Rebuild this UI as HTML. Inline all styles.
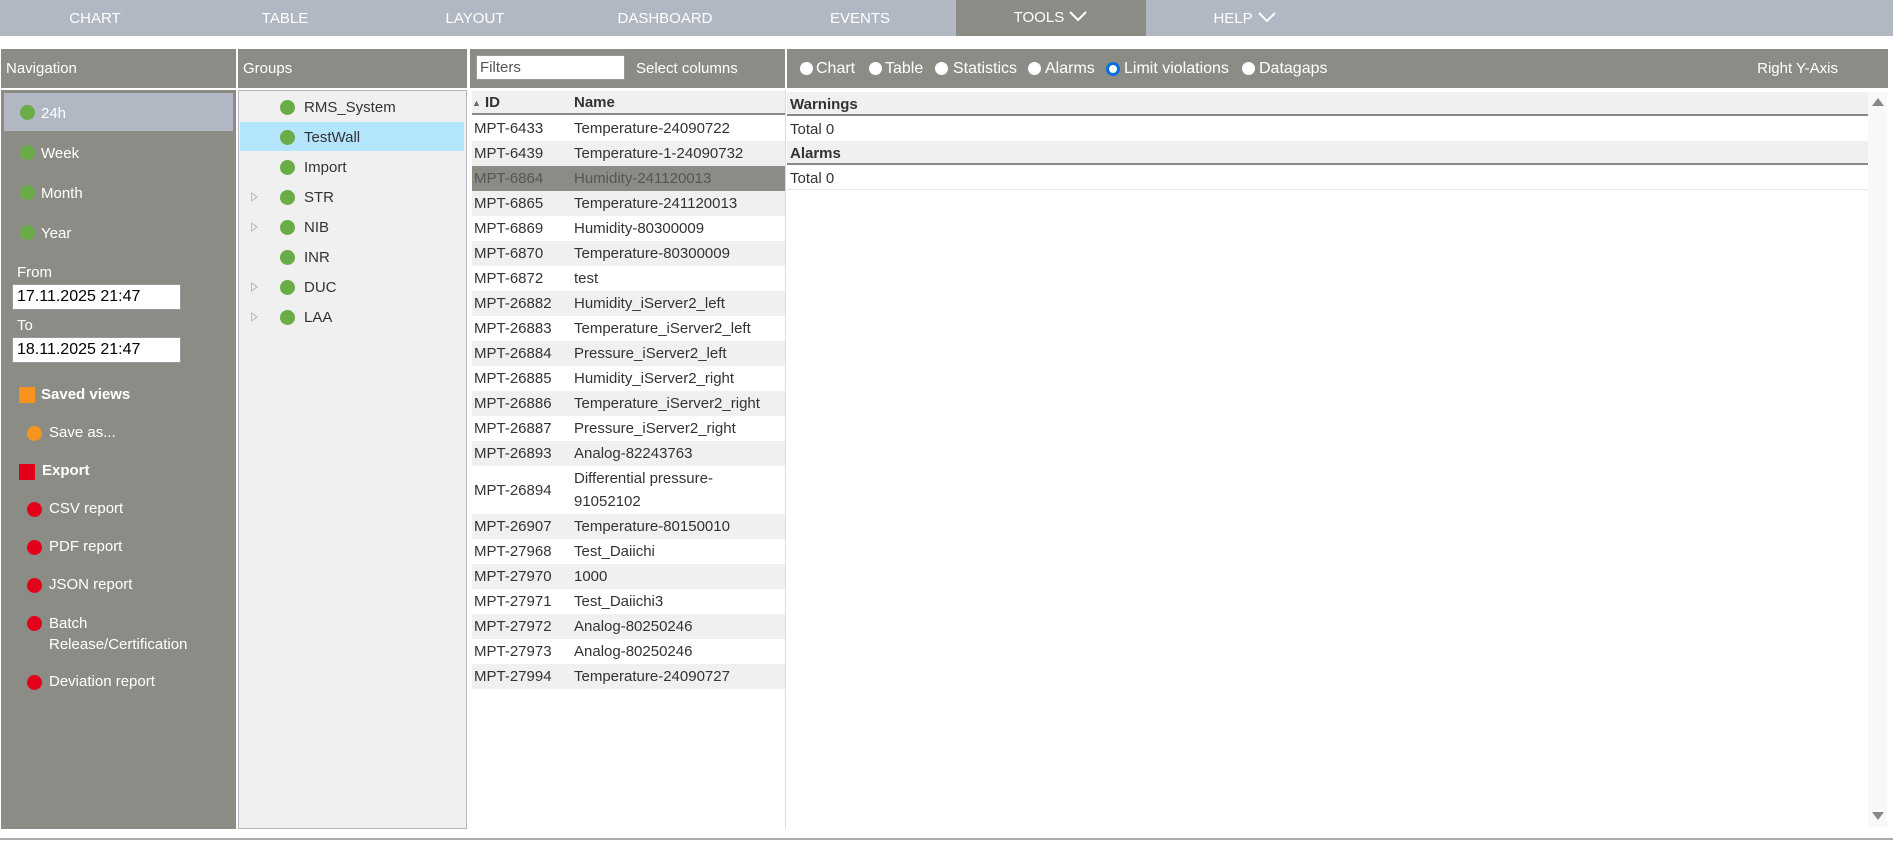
<!DOCTYPE html>
<html><head><meta charset="utf-8"><style>
*{box-sizing:border-box;margin:0;padding:0}
body{width:1893px;height:845px;background:#fff;font-family:"Liberation Sans",sans-serif;font-size:15px;color:#333;position:relative;overflow:hidden}
.a{position:absolute;white-space:nowrap}
.top{left:0;top:0;width:1893px;height:36px;background:#b1b8c3}
.top div{position:absolute;top:1px;height:35px;width:190px;text-align:center;line-height:35px;color:#fff;font-size:15px}
.hd{background:#8c8c87;color:#fff;top:49px;height:39px;line-height:39px;font-size:15px}
.dot{position:absolute;width:15px;height:15px;border-radius:50%}
.g{background:#6aac48}
.row{position:absolute;left:0;width:313px;height:25px;line-height:25px}
.row span{position:absolute;left:2px}
.row b{font-weight:normal;position:absolute;left:102px}
.alt{background:#f0f0f0}
.tri{position:absolute;width:0;height:0;border-top:5px solid transparent;border-bottom:5px solid transparent;border-left:7px solid #bbb}
.tri:after{content:"";position:absolute;left:-6px;top:-3px;border-top:3px solid transparent;border-bottom:3px solid transparent;border-left:4px solid #f0f0f0}
.rad{position:absolute;top:13px;width:13px;height:13px;border-radius:50%;background:#fff}
.rl{position:absolute;top:0;font-size:16px}
.w{color:#fff}
</style></head><body>
<div class="a top">
<div style="left:0">CHART</div><div style="left:190px">TABLE</div><div style="left:380px">LAYOUT</div><div style="left:570px">DASHBOARD</div><div style="left:765px">EVENTS</div>
<div style="left:956px;top:0;height:36px;background:#8c8c87">TOOLS <svg width="20" height="12" viewBox="0 0 20 12"><path d="M2 2 L10 10 L18 2" stroke="#fff" stroke-width="2" fill="none"/></svg></div>
<div style="left:1150px">HELP <svg width="20" height="12" viewBox="0 0 20 12"><path d="M2 2 L10 10 L18 2" stroke="#fff" stroke-width="2" fill="none"/></svg></div>
</div>

<!-- Navigation -->
<div class="a hd" style="left:1px;width:235px;padding-left:5px">Navigation</div>
<div class="a" style="left:1px;top:90px;width:235px;height:739px;background:#8c8c87"></div>
<div class="a" style="left:4px;top:93px;width:229px;height:38px;background:#b1b8c3"></div>
<div class="dot g" style="left:20px;top:105px"></div><div class="a w" style="left:41px;top:105px">24h</div>
<div class="dot g" style="left:20px;top:145px"></div><div class="a w" style="left:41px;top:145px">Week</div>
<div class="dot g" style="left:20px;top:185px"></div><div class="a w" style="left:41px;top:185px">Month</div>
<div class="dot g" style="left:20px;top:225px"></div><div class="a w" style="left:41px;top:225px">Year</div>
<div class="a w" style="left:17px;top:264px">From</div>
<div class="a" style="left:12px;top:284px;width:169px;height:26px;background:#fff;border:1px solid #999;color:#000;font-size:16px;line-height:24px;padding-left:4px">17.11.2025 21:47</div>
<div class="a w" style="left:17px;top:317px">To</div>
<div class="a" style="left:12px;top:337px;width:169px;height:26px;background:#fff;border:1px solid #999;color:#000;font-size:16px;line-height:24px;padding-left:4px">18.11.2025 21:47</div>
<div class="a" style="left:19px;top:387px;width:16px;height:16px;background:#f7931e"></div><div class="a w" style="left:41px;top:386px;font-weight:bold">Saved views</div>
<div class="dot" style="left:27px;top:426px;background:#f7931e"></div><div class="a w" style="left:49px;top:424px">Save as...</div>
<div class="a" style="left:19px;top:464px;width:16px;height:16px;background:#e3001b"></div><div class="a w" style="left:42px;top:462px;font-weight:bold">Export</div>
<div class="dot" style="left:27px;top:502px;background:#e3001b"></div><div class="a w" style="left:49px;top:500px">CSV report</div>
<div class="dot" style="left:27px;top:540px;background:#e3001b"></div><div class="a w" style="left:49px;top:538px">PDF report</div>
<div class="dot" style="left:27px;top:578px;background:#e3001b"></div><div class="a w" style="left:49px;top:576px">JSON report</div>
<div class="dot" style="left:27px;top:616px;background:#e3001b"></div><div class="a w" style="left:49px;top:613px;line-height:21px">Batch<br>Release/Certification</div>
<div class="dot" style="left:27px;top:675px;background:#e3001b"></div><div class="a w" style="left:49px;top:673px">Deviation report</div>

<!-- Groups -->
<div class="a hd" style="left:238px;width:229px;padding-left:5px">Groups</div>
<div class="a" style="left:238px;top:90px;width:229px;height:739px;background:#f0f0f0;border:1px solid #b1b8c3"></div>
<div class="a" style="left:240px;top:122px;width:224px;height:29px;background:#b3e5fc"></div>
<div class="dot g" style="left:280px;top:100px"></div><div class="a" style="left:304px;top:99px">RMS_System</div>
<div class="dot g" style="left:280px;top:130px"></div><div class="a" style="left:304px;top:129px">TestWall</div>
<div class="dot g" style="left:280px;top:160px"></div><div class="a" style="left:304px;top:159px">Import</div>
<div class="tri" style="left:251px;top:192px"></div><div class="dot g" style="left:280px;top:190px"></div><div class="a" style="left:304px;top:189px">STR</div>
<div class="tri" style="left:251px;top:222px"></div><div class="dot g" style="left:280px;top:220px"></div><div class="a" style="left:304px;top:219px">NIB</div>
<div class="dot g" style="left:280px;top:250px"></div><div class="a" style="left:304px;top:249px">INR</div>
<div class="tri" style="left:251px;top:282px"></div><div class="dot g" style="left:280px;top:280px"></div><div class="a" style="left:304px;top:279px">DUC</div>
<div class="tri" style="left:251px;top:312px"></div><div class="dot g" style="left:280px;top:310px"></div><div class="a" style="left:304px;top:309px">LAA</div>

<!-- List -->
<div class="a hd" style="left:470px;width:315px"></div>
<div class="a" style="left:476px;top:55px;width:149px;height:25px;background:#fff;border:1px solid #999;line-height:23px;padding-left:3px;color:#555">Filters</div>
<div class="a" style="left:636px;top:49px;line-height:39px;color:#fff">Select columns</div>
<div class="a" style="left:785px;top:90px;width:1px;height:739px;background:#ddd"></div>
<div class="a" style="left:472px;top:90px;width:313px">
<div class="row alt" style="top:1px;height:24px;border-bottom:2px solid #888;font-weight:bold;line-height:24px"><span style="left:0;font-size:9px;color:#666;font-weight:normal">&#9650;</span><span style="left:13px">ID</span><b style="font-weight:bold">Name</b></div>
<div class="row" style="top:26px"><span>MPT-6433</span><b>Temperature-24090722</b></div>
<div class="row alt" style="top:51px"><span>MPT-6439</span><b>Temperature-1-24090732</b></div>
<div class="row" style="top:76px;background:#8c8c87;color:#555"><span>MPT-6864</span><b>Humidity-241120013</b></div>
<div class="row alt" style="top:101px"><span>MPT-6865</span><b>Temperature-241120013</b></div>
<div class="row" style="top:126px"><span>MPT-6869</span><b>Humidity-80300009</b></div>
<div class="row alt" style="top:151px"><span>MPT-6870</span><b>Temperature-80300009</b></div>
<div class="row" style="top:176px"><span>MPT-6872</span><b>test</b></div>
<div class="row alt" style="top:201px"><span>MPT-26882</span><b>Humidity_iServer2_left</b></div>
<div class="row" style="top:226px"><span>MPT-26883</span><b>Temperature_iServer2_left</b></div>
<div class="row alt" style="top:251px"><span>MPT-26884</span><b>Pressure_iServer2_left</b></div>
<div class="row" style="top:276px"><span>MPT-26885</span><b>Humidity_iServer2_right</b></div>
<div class="row alt" style="top:301px"><span>MPT-26886</span><b>Temperature_iServer2_right</b></div>
<div class="row" style="top:326px"><span>MPT-26887</span><b>Pressure_iServer2_right</b></div>
<div class="row alt" style="top:351px"><span>MPT-26893</span><b>Analog-82243763</b></div>
<div class="row" style="top:376px;height:48px"><span style="top:12px">MPT-26894</span><b style="line-height:23px;top:1px">Differential pressure-<br>91052102</b></div>
<div class="row alt" style="top:424px"><span>MPT-26907</span><b>Temperature-80150010</b></div>
<div class="row" style="top:449px"><span>MPT-27968</span><b>Test_Daiichi</b></div>
<div class="row alt" style="top:474px"><span>MPT-27970</span><b>1000</b></div>
<div class="row" style="top:499px"><span>MPT-27971</span><b>Test_Daiichi3</b></div>
<div class="row alt" style="top:524px"><span>MPT-27972</span><b>Analog-80250246</b></div>
<div class="row" style="top:549px"><span>MPT-27973</span><b>Analog-80250246</b></div>
<div class="row alt" style="top:574px"><span>MPT-27994</span><b>Temperature-24090727</b></div>
</div>

<!-- Right -->
<div class="a hd" style="left:787px;width:1101px;color:#fff">
<span class="rad" style="left:13px"></span><span class="rl" style="left:29px">Chart</span>
<span class="rad" style="left:82px"></span><span class="rl" style="left:98px">Table</span>
<span class="rad" style="left:148px"></span><span class="rl" style="left:166px">Statistics</span>
<span class="rad" style="left:241px"></span><span class="rl" style="left:258px">Alarms</span>
<span class="rad" style="left:319px;border:3px solid #0a6ee0;width:14px;height:14px"></span><span class="rl" style="left:337px">Limit violations</span>
<span class="rad" style="left:455px"></span><span class="rl" style="left:472px">Datagaps</span>
<span style="position:absolute;right:50px;font-size:15px">Right Y-Axis</span></div>
<div class="a" style="left:787px;top:92px;width:1081px">
<div class="a alt" style="left:0;top:0;width:1081px;height:24px;border-bottom:2px solid #888;font-weight:bold;padding-left:3px;line-height:26px">Warnings</div>
<div class="a" style="left:3px;top:24px;height:25px;line-height:27px">Total 0</div>
<div class="a alt" style="left:0;top:49px;width:1081px;height:24px;border-bottom:2px solid #888;font-weight:bold;padding-left:3px;line-height:26px">Alarms</div>
<div class="a" style="left:0;top:73px;width:1081px;height:25px;line-height:27px;padding-left:3px;border-bottom:1px solid #e6e6e6">Total 0</div>
</div>
<div class="a" style="left:1868px;top:92px;width:19px;height:735px;background:#f8f8f8"></div>
<div class="a" style="left:1872px;top:98px;border-left:6px solid transparent;border-right:6px solid transparent;border-bottom:8px solid #888"></div>
<div class="a" style="left:1872px;top:812px;border-left:6px solid transparent;border-right:6px solid transparent;border-top:8px solid #888"></div>

<div class="a" style="left:0;top:838px;width:1893px;height:2px;background:#aaa"></div>
</body></html>
